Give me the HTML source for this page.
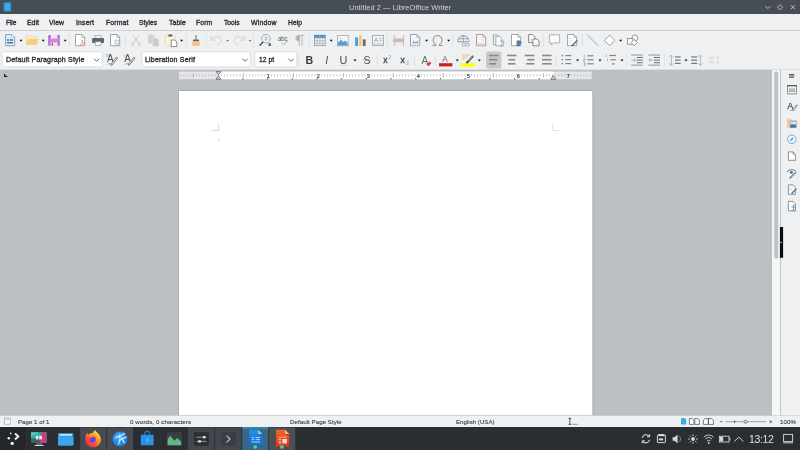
<!DOCTYPE html>
<html>
<head>
<meta charset="utf-8">
<title>Untitled 2 — LibreOffice Writer</title>
<style>
*{box-sizing:border-box;margin:0;padding:0}
html,body{width:800px;height:450px;overflow:hidden;background:#eff0f1;font-family:"Liberation Sans",sans-serif;}
#root{position:absolute;left:0;top:0;width:800px;height:450px;overflow:hidden;will-change:transform;background:#eff0f1}
.a{position:absolute}
.tx{position:absolute;white-space:nowrap;color:#2d3033;transform-origin:0 0}
#title{left:0;top:0;width:800px;height:14px;background:#474d55}
#work{left:0;top:70px;width:772px;height:345.5px;background:#bcc0c5}
#page{left:178.5px;top:90.6px;width:414px;height:326px;background:#fff;border:1px solid #a9adb2;border-bottom:none}
#task{left:0;top:427.4px;width:800px;height:23px;background:#2a2e33}
.combo{position:absolute;background:#fff;border:1px solid #d0d3d6;border-radius:2px}
svg{position:absolute;left:0;top:0}
</style>
</head>
<body>
<div id="root">
<div id="title" class="a"></div>
<div class="tx" style="left:348.7px;top:4.00px;font-size:7.3px;line-height:7.3px;color:#d2d5d8;letter-spacing:0.06px;transform:scaleX(1.0178);">Untitled 2 — LibreOffice Writer</div>
<div class="tx" style="left:5.6px;top:20.00px;font-size:6.7px;line-height:6.7px;color:#2b2e31;letter-spacing:-0.066px;transform:scaleX(0.9813);-webkit-text-stroke:0.32px #2b2e31;">File</div>
<div class="tx" style="left:26.6px;top:20.00px;font-size:6.7px;line-height:6.7px;color:#2b2e31;letter-spacing:0.076px;transform:scaleX(1.0193);-webkit-text-stroke:0.32px #2b2e31;">Edit</div>
<div class="tx" style="left:49.4px;top:20.00px;font-size:6.7px;line-height:6.7px;color:#2b2e31;letter-spacing:0.1px;transform:scaleX(1.0204);-webkit-text-stroke:0.32px #2b2e31;">View</div>
<div class="tx" style="left:76px;top:20.00px;font-size:6.7px;line-height:6.7px;color:#2b2e31;letter-spacing:0.124px;transform:scaleX(1.0358);-webkit-text-stroke:0.32px #2b2e31;">Insert</div>
<div class="tx" style="left:105.6px;top:20.00px;font-size:6.7px;line-height:6.7px;color:#2b2e31;letter-spacing:0.118px;transform:scaleX(1.0271);-webkit-text-stroke:0.32px #2b2e31;">Format</div>
<div class="tx" style="left:139.4px;top:20.00px;font-size:6.7px;line-height:6.7px;color:#2b2e31;letter-spacing:-0.025px;transform:scaleX(0.9932);-webkit-text-stroke:0.32px #2b2e31;">Styles</div>
<div class="tx" style="left:168.6px;top:20.00px;font-size:6.7px;line-height:6.7px;color:#2b2e31;letter-spacing:0.098px;transform:scaleX(1.0239);-webkit-text-stroke:0.32px #2b2e31;">Table</div>
<div class="tx" style="left:196.4px;top:20.00px;font-size:6.7px;line-height:6.7px;color:#2b2e31;letter-spacing:0.095px;transform:scaleX(1.0179);-webkit-text-stroke:0.32px #2b2e31;">Form</div>
<div class="tx" style="left:224px;top:20.00px;font-size:6.7px;line-height:6.7px;color:#2b2e31;letter-spacing:-0.005px;transform:scaleX(0.9987);-webkit-text-stroke:0.32px #2b2e31;">Tools</div>
<div class="tx" style="left:251px;top:20.00px;font-size:6.7px;line-height:6.7px;color:#2b2e31;letter-spacing:0.177px;transform:scaleX(1.0358);-webkit-text-stroke:0.32px #2b2e31;">Window</div>
<div class="tx" style="left:288px;top:20.00px;font-size:6.7px;line-height:6.7px;color:#2b2e31;letter-spacing:0.037px;transform:scaleX(1.0079);-webkit-text-stroke:0.32px #2b2e31;">Help</div>
<div class="a" style="left:0;top:30px;width:800px;height:1px;background:#cdd0d2"></div>
<div class="a" style="left:0;top:69px;width:800px;height:1px;background:#dcdee0"></div>
<div id="work" class="a"></div>
<svg width="800" height="450" viewBox="0 0 800 450"><rect x="2.100" y="51.850" width="100.200" height="15.100" rx="1.600" fill="#fff" stroke="#cfd2d5" stroke-width="0.700"/><rect x="142" y="51.850" width="108.300" height="15.100" rx="1.600" fill="#fff" stroke="#cfd2d5" stroke-width="0.700"/><rect x="254.800" y="51.850" width="42" height="15.100" rx="1.600" fill="#fff" stroke="#cfd2d5" stroke-width="0.700"/></svg>
<div class="tx" style="left:5.6px;top:57.00px;font-size:6.8px;line-height:6.8px;color:#2b2e31;letter-spacing:0.141px;transform:scaleX(1.0412);-webkit-text-stroke:0.32px #2b2e31;">Default Paragraph Style</div>
<div class="tx" style="left:145px;top:57.00px;font-size:6.8px;line-height:6.8px;color:#2b2e31;letter-spacing:0.142px;transform:scaleX(1.0445);-webkit-text-stroke:0.32px #2b2e31;">Liberation Serif</div>
<div class="tx" style="left:259px;top:57.00px;font-size:6.8px;line-height:6.8px;color:#2b2e31;letter-spacing:0.009px;transform:scaleX(1.0025);-webkit-text-stroke:0.32px #2b2e31;">12 pt</div>
<div class="a" style="left:0;top:415.5px;width:800px;height:12px;background:#eff0f1"></div>
<div class="tx" style="left:18px;top:419.00px;font-size:6.0px;line-height:6.0px;color:#3d4043;letter-spacing:0.04px;transform:scaleX(1.013);-webkit-text-stroke:0.12px #3d4043;">Page 1 of 1</div>
<div class="tx" style="left:130px;top:419.00px;font-size:6.0px;line-height:6.0px;color:#3d4043;letter-spacing:0.091px;transform:scaleX(1.0308);-webkit-text-stroke:0.12px #3d4043;">0 words, 0 characters</div>
<div class="tx" style="left:290px;top:419.00px;font-size:6.0px;line-height:6.0px;color:#3d4043;letter-spacing:0.059px;transform:scaleX(1.0198);-webkit-text-stroke:0.12px #3d4043;">Default Page Style</div>
<div class="tx" style="left:456px;top:419.00px;font-size:6.0px;line-height:6.0px;color:#3d4043;letter-spacing:0.034px;transform:scaleX(1.0108);-webkit-text-stroke:0.12px #3d4043;">English (USA)</div>
<div class="tx" style="left:780px;top:419.00px;font-size:6.0px;line-height:6.0px;color:#3d4043;letter-spacing:0.109px;transform:scaleX(1.0209);-webkit-text-stroke:0.12px #3d4043;">100%</div>
<div id="task" class="a"></div>
<div class="tx" style="left:749.1px;top:434.00px;font-size:11px;line-height:11px;color:#dfe1e3;letter-spacing:-0.328px;transform:scaleX(0.9499);">13:12</div>
<svg width="800" height="450" viewBox="0 0 800 450">
<path d="M178.5 415.5V90.5H592.9V415.5" fill="#fff" stroke="#a7abb0" stroke-width="1"/>
<rect x="3.9" y="2.6" width="7" height="8.6" rx="0.6" fill="#2aa6ea" stroke="#2586cc" stroke-width="0.5"/>
<path d="M5.5 5.2h3.2M5.5 6.8h3.8M5.5 8.4h3.8" stroke="#4cc0f5" stroke-width="0.6"/>
<path d="M765.400 6.100l2.500 2.500 2.500-2.500" fill="none" stroke="#c3c6ca" stroke-width="0.9"/>
<path d="M780.200 4.600l2.600 2.600-2.600 2.600-2.600-2.600z" fill="none" stroke="#c3c6ca" stroke-width="0.9"/>
<path d="M790.800 5.100l4.200 4.200M795 5.100l-4.200 4.200" fill="none" stroke="#c3c6ca" stroke-width="0.9"/>
<path d="M4.600 74v2.300h2.700" fill="none" stroke="#15171a" stroke-width="1.150"/>
<rect x="179" y="71.600" width="412.800" height="7.600" fill="#e4e6e8"/>
<rect x="218.300" y="71.600" width="335.200" height="7.600" fill="#fff"/>
<rect x="180.40" y="74.2" width="0.7" height="2.2" fill="#b0b3b6"/>
<rect x="183.52" y="74.2" width="0.7" height="2.2" fill="#b0b3b6"/>
<rect x="186.65" y="74.2" width="0.7" height="2.2" fill="#b0b3b6"/>
<rect x="189.77" y="74.2" width="0.7" height="2.2" fill="#b0b3b6"/>
<rect x="192.90" y="73.2" width="0.7" height="4.3" fill="#8e9296"/>
<rect x="196.02" y="74.2" width="0.7" height="2.2" fill="#b0b3b6"/>
<rect x="199.15" y="74.2" width="0.7" height="2.2" fill="#b0b3b6"/>
<rect x="202.27" y="74.2" width="0.7" height="2.2" fill="#b0b3b6"/>
<rect x="205.40" y="74.2" width="0.7" height="2.2" fill="#b0b3b6"/>
<rect x="208.52" y="74.2" width="0.7" height="2.2" fill="#b0b3b6"/>
<rect x="211.65" y="74.2" width="0.7" height="2.2" fill="#b0b3b6"/>
<rect x="214.77" y="74.2" width="0.7" height="2.2" fill="#b0b3b6"/>
<rect x="221.02" y="74.2" width="0.7" height="2.2" fill="#b0b3b6"/>
<rect x="224.15" y="74.2" width="0.7" height="2.2" fill="#b0b3b6"/>
<rect x="227.27" y="74.2" width="0.7" height="2.2" fill="#b0b3b6"/>
<rect x="230.40" y="74.2" width="0.7" height="2.2" fill="#b0b3b6"/>
<rect x="233.52" y="74.2" width="0.7" height="2.2" fill="#b0b3b6"/>
<rect x="236.65" y="74.2" width="0.7" height="2.2" fill="#b0b3b6"/>
<rect x="239.77" y="74.2" width="0.7" height="2.2" fill="#b0b3b6"/>
<rect x="242.90" y="73.2" width="0.7" height="4.3" fill="#8e9296"/>
<rect x="246.02" y="74.2" width="0.7" height="2.2" fill="#b0b3b6"/>
<rect x="249.15" y="74.2" width="0.7" height="2.2" fill="#b0b3b6"/>
<rect x="252.27" y="74.2" width="0.7" height="2.2" fill="#b0b3b6"/>
<rect x="255.40" y="74.2" width="0.7" height="2.2" fill="#b0b3b6"/>
<rect x="258.52" y="74.2" width="0.7" height="2.2" fill="#b0b3b6"/>
<rect x="261.65" y="74.2" width="0.7" height="2.2" fill="#b0b3b6"/>
<rect x="264.77" y="74.2" width="0.7" height="2.2" fill="#b0b3b6"/>
<rect x="271.02" y="74.2" width="0.7" height="2.2" fill="#b0b3b6"/>
<rect x="274.15" y="74.2" width="0.7" height="2.2" fill="#b0b3b6"/>
<rect x="277.27" y="74.2" width="0.7" height="2.2" fill="#b0b3b6"/>
<rect x="280.40" y="74.2" width="0.7" height="2.2" fill="#b0b3b6"/>
<rect x="283.52" y="74.2" width="0.7" height="2.2" fill="#b0b3b6"/>
<rect x="286.65" y="74.2" width="0.7" height="2.2" fill="#b0b3b6"/>
<rect x="289.77" y="74.2" width="0.7" height="2.2" fill="#b0b3b6"/>
<rect x="292.90" y="73.2" width="0.7" height="4.3" fill="#8e9296"/>
<rect x="296.02" y="74.2" width="0.7" height="2.2" fill="#b0b3b6"/>
<rect x="299.15" y="74.2" width="0.7" height="2.2" fill="#b0b3b6"/>
<rect x="302.27" y="74.2" width="0.7" height="2.2" fill="#b0b3b6"/>
<rect x="305.40" y="74.2" width="0.7" height="2.2" fill="#b0b3b6"/>
<rect x="308.52" y="74.2" width="0.7" height="2.2" fill="#b0b3b6"/>
<rect x="311.65" y="74.2" width="0.7" height="2.2" fill="#b0b3b6"/>
<rect x="314.77" y="74.2" width="0.7" height="2.2" fill="#b0b3b6"/>
<rect x="321.02" y="74.2" width="0.7" height="2.2" fill="#b0b3b6"/>
<rect x="324.15" y="74.2" width="0.7" height="2.2" fill="#b0b3b6"/>
<rect x="327.27" y="74.2" width="0.7" height="2.2" fill="#b0b3b6"/>
<rect x="330.40" y="74.2" width="0.7" height="2.2" fill="#b0b3b6"/>
<rect x="333.52" y="74.2" width="0.7" height="2.2" fill="#b0b3b6"/>
<rect x="336.65" y="74.2" width="0.7" height="2.2" fill="#b0b3b6"/>
<rect x="339.77" y="74.2" width="0.7" height="2.2" fill="#b0b3b6"/>
<rect x="342.90" y="73.2" width="0.7" height="4.3" fill="#8e9296"/>
<rect x="346.02" y="74.2" width="0.7" height="2.2" fill="#b0b3b6"/>
<rect x="349.15" y="74.2" width="0.7" height="2.2" fill="#b0b3b6"/>
<rect x="352.27" y="74.2" width="0.7" height="2.2" fill="#b0b3b6"/>
<rect x="355.40" y="74.2" width="0.7" height="2.2" fill="#b0b3b6"/>
<rect x="358.52" y="74.2" width="0.7" height="2.2" fill="#b0b3b6"/>
<rect x="361.65" y="74.2" width="0.7" height="2.2" fill="#b0b3b6"/>
<rect x="364.77" y="74.2" width="0.7" height="2.2" fill="#b0b3b6"/>
<rect x="371.02" y="74.2" width="0.7" height="2.2" fill="#b0b3b6"/>
<rect x="374.15" y="74.2" width="0.7" height="2.2" fill="#b0b3b6"/>
<rect x="377.27" y="74.2" width="0.7" height="2.2" fill="#b0b3b6"/>
<rect x="380.40" y="74.2" width="0.7" height="2.2" fill="#b0b3b6"/>
<rect x="383.52" y="74.2" width="0.7" height="2.2" fill="#b0b3b6"/>
<rect x="386.65" y="74.2" width="0.7" height="2.2" fill="#b0b3b6"/>
<rect x="389.77" y="74.2" width="0.7" height="2.2" fill="#b0b3b6"/>
<rect x="392.90" y="73.2" width="0.7" height="4.3" fill="#8e9296"/>
<rect x="396.02" y="74.2" width="0.7" height="2.2" fill="#b0b3b6"/>
<rect x="399.15" y="74.2" width="0.7" height="2.2" fill="#b0b3b6"/>
<rect x="402.27" y="74.2" width="0.7" height="2.2" fill="#b0b3b6"/>
<rect x="405.40" y="74.2" width="0.7" height="2.2" fill="#b0b3b6"/>
<rect x="408.52" y="74.2" width="0.7" height="2.2" fill="#b0b3b6"/>
<rect x="411.65" y="74.2" width="0.7" height="2.2" fill="#b0b3b6"/>
<rect x="414.77" y="74.2" width="0.7" height="2.2" fill="#b0b3b6"/>
<rect x="421.02" y="74.2" width="0.7" height="2.2" fill="#b0b3b6"/>
<rect x="424.15" y="74.2" width="0.7" height="2.2" fill="#b0b3b6"/>
<rect x="427.27" y="74.2" width="0.7" height="2.2" fill="#b0b3b6"/>
<rect x="430.40" y="74.2" width="0.7" height="2.2" fill="#b0b3b6"/>
<rect x="433.52" y="74.2" width="0.7" height="2.2" fill="#b0b3b6"/>
<rect x="436.65" y="74.2" width="0.7" height="2.2" fill="#b0b3b6"/>
<rect x="439.77" y="74.2" width="0.7" height="2.2" fill="#b0b3b6"/>
<rect x="442.90" y="73.2" width="0.7" height="4.3" fill="#8e9296"/>
<rect x="446.02" y="74.2" width="0.7" height="2.2" fill="#b0b3b6"/>
<rect x="449.15" y="74.2" width="0.7" height="2.2" fill="#b0b3b6"/>
<rect x="452.27" y="74.2" width="0.7" height="2.2" fill="#b0b3b6"/>
<rect x="455.40" y="74.2" width="0.7" height="2.2" fill="#b0b3b6"/>
<rect x="458.52" y="74.2" width="0.7" height="2.2" fill="#b0b3b6"/>
<rect x="461.65" y="74.2" width="0.7" height="2.2" fill="#b0b3b6"/>
<rect x="464.77" y="74.2" width="0.7" height="2.2" fill="#b0b3b6"/>
<rect x="471.02" y="74.2" width="0.7" height="2.2" fill="#b0b3b6"/>
<rect x="474.15" y="74.2" width="0.7" height="2.2" fill="#b0b3b6"/>
<rect x="477.27" y="74.2" width="0.7" height="2.2" fill="#b0b3b6"/>
<rect x="480.40" y="74.2" width="0.7" height="2.2" fill="#b0b3b6"/>
<rect x="483.52" y="74.2" width="0.7" height="2.2" fill="#b0b3b6"/>
<rect x="486.65" y="74.2" width="0.7" height="2.2" fill="#b0b3b6"/>
<rect x="489.77" y="74.2" width="0.7" height="2.2" fill="#b0b3b6"/>
<rect x="492.90" y="73.2" width="0.7" height="4.3" fill="#8e9296"/>
<rect x="496.02" y="74.2" width="0.7" height="2.2" fill="#b0b3b6"/>
<rect x="499.15" y="74.2" width="0.7" height="2.2" fill="#b0b3b6"/>
<rect x="502.27" y="74.2" width="0.7" height="2.2" fill="#b0b3b6"/>
<rect x="505.40" y="74.2" width="0.7" height="2.2" fill="#b0b3b6"/>
<rect x="508.52" y="74.2" width="0.7" height="2.2" fill="#b0b3b6"/>
<rect x="511.65" y="74.2" width="0.7" height="2.2" fill="#b0b3b6"/>
<rect x="514.78" y="74.2" width="0.7" height="2.2" fill="#b0b3b6"/>
<rect x="521.03" y="74.2" width="0.7" height="2.2" fill="#b0b3b6"/>
<rect x="524.15" y="74.2" width="0.7" height="2.2" fill="#b0b3b6"/>
<rect x="527.28" y="74.2" width="0.7" height="2.2" fill="#b0b3b6"/>
<rect x="530.40" y="74.2" width="0.7" height="2.2" fill="#b0b3b6"/>
<rect x="533.53" y="74.2" width="0.7" height="2.2" fill="#b0b3b6"/>
<rect x="536.65" y="74.2" width="0.7" height="2.2" fill="#b0b3b6"/>
<rect x="539.78" y="74.2" width="0.7" height="2.2" fill="#b0b3b6"/>
<rect x="542.90" y="73.2" width="0.7" height="4.3" fill="#8e9296"/>
<rect x="546.03" y="74.2" width="0.7" height="2.2" fill="#b0b3b6"/>
<rect x="549.15" y="74.2" width="0.7" height="2.2" fill="#b0b3b6"/>
<rect x="552.28" y="74.2" width="0.7" height="2.2" fill="#b0b3b6"/>
<rect x="555.40" y="74.2" width="0.7" height="2.2" fill="#b0b3b6"/>
<rect x="558.53" y="74.2" width="0.7" height="2.2" fill="#b0b3b6"/>
<rect x="561.65" y="74.2" width="0.7" height="2.2" fill="#b0b3b6"/>
<rect x="564.78" y="74.2" width="0.7" height="2.2" fill="#b0b3b6"/>
<rect x="571.03" y="74.2" width="0.7" height="2.2" fill="#b0b3b6"/>
<rect x="574.15" y="74.2" width="0.7" height="2.2" fill="#b0b3b6"/>
<rect x="577.28" y="74.2" width="0.7" height="2.2" fill="#b0b3b6"/>
<rect x="580.40" y="74.2" width="0.7" height="2.2" fill="#b0b3b6"/>
<rect x="583.53" y="74.2" width="0.7" height="2.2" fill="#b0b3b6"/>
<rect x="586.65" y="74.2" width="0.7" height="2.2" fill="#b0b3b6"/>
<rect x="589.78" y="74.2" width="0.7" height="2.2" fill="#b0b3b6"/>
<text x="268.2" y="77.5" font-size="5.600" text-anchor="middle" fill="#2f3235" stroke="#2f3235" stroke-width="0.150" font-family="Liberation Sans">1</text>
<text x="318.2" y="77.5" font-size="5.600" text-anchor="middle" fill="#2f3235" stroke="#2f3235" stroke-width="0.150" font-family="Liberation Sans">2</text>
<text x="368.2" y="77.5" font-size="5.600" text-anchor="middle" fill="#2f3235" stroke="#2f3235" stroke-width="0.150" font-family="Liberation Sans">3</text>
<text x="418.2" y="77.5" font-size="5.600" text-anchor="middle" fill="#2f3235" stroke="#2f3235" stroke-width="0.150" font-family="Liberation Sans">4</text>
<text x="468.2" y="77.5" font-size="5.600" text-anchor="middle" fill="#2f3235" stroke="#2f3235" stroke-width="0.150" font-family="Liberation Sans">5</text>
<text x="518.2" y="77.5" font-size="5.600" text-anchor="middle" fill="#2f3235" stroke="#2f3235" stroke-width="0.150" font-family="Liberation Sans">6</text>
<text x="568.2" y="77.5" font-size="5.600" text-anchor="middle" fill="#2f3235" stroke="#2f3235" stroke-width="0.150" font-family="Liberation Sans">7</text>
<path d="M242.00 79.3h1.8l-0.9-1.2z" fill="#2b2e31"/>
<path d="M266.70 79.3h1.8l-0.9-1.2z" fill="#2b2e31"/>
<path d="M291.40 79.3h1.8l-0.9-1.2z" fill="#2b2e31"/>
<path d="M316.10 79.3h1.8l-0.9-1.2z" fill="#2b2e31"/>
<path d="M340.80 79.3h1.8l-0.9-1.2z" fill="#2b2e31"/>
<path d="M365.50 79.3h1.8l-0.9-1.2z" fill="#2b2e31"/>
<path d="M390.20 79.3h1.8l-0.9-1.2z" fill="#2b2e31"/>
<path d="M414.90 79.3h1.8l-0.9-1.2z" fill="#2b2e31"/>
<path d="M439.60 79.3h1.8l-0.9-1.2z" fill="#2b2e31"/>
<path d="M464.30 79.3h1.8l-0.9-1.2z" fill="#2b2e31"/>
<path d="M489.00 79.3h1.8l-0.9-1.2z" fill="#2b2e31"/>
<path d="M513.70 79.3h1.8l-0.9-1.2z" fill="#2b2e31"/>
<path d="M538.40 79.3h1.8l-0.9-1.2z" fill="#2b2e31"/>
<path d="M216.1 71.6h4.8l-2.4 3.3z" fill="#d8dadc" stroke="#33373b" stroke-width="0.6"/>
<path d="M216.1 79.3h4.8l-2.4-3.6z" fill="#d8dadc" stroke="#33373b" stroke-width="0.6"/>
<path d="M550.9 79.3h4.8l-2.4-3.6z" fill="#d8dadc" stroke="#33373b" stroke-width="0.6"/>
<path d="M211.6 130.6h7V124" fill="none" stroke="#c9c9c9" stroke-width="0.7"/>
<path d="M559.5 130.6h-6.8V124" fill="none" stroke="#d2d2d2" stroke-width="0.7"/>
<rect x="218.5" y="138.8" width="0.9" height="1.6" fill="#bdbdbd"/>
<rect x="772" y="70" width="8.5" height="345.5" fill="#f5f6f6"/>
<rect x="774.2" y="71.3" width="4" height="187.4" rx="2" fill="#bfc2c5"/>
<rect x="780" y="70" width="0.8" height="345.5" fill="#b4b7ba"/>
<rect x="779.9" y="227" width="3.2" height="30.8" fill="#0a0a0a"/>
<path d="M780.6 241.6l1.6 1l-1.6 1z" fill="#e0e0e0"/>
<path d="M789 74.5h5.2M789 75.9h5.2M789 77.3h5.2" stroke="#4a4d50" stroke-width="0.9"/>
<rect x="787.700" y="85.500" width="8.600" height="8.400" fill="#f7f8f8" stroke="#666a6e" stroke-width="0.750"/>
<rect x="787.300" y="85.100" width="9.400" height="1.300" fill="#565a5f"/>
<rect x="789.700" y="88.900" width="4.600" height="2.800" fill="#e4e5e6" stroke="#74787c" stroke-width="0.600"/><rect x="790.600" y="90" width="2.800" height="0.600" fill="#85898d"/>
<text x="787.300" y="109.200" font-size="9" fill="#45484b" stroke="#45484b" stroke-width="0.250" font-family="Liberation Sans">A</text>
<path d="M793.200 110l3.600-4.600" stroke="#7c8084" stroke-width="1.900" stroke-linecap="round"/>
<path d="M793.500 109.600l3.200-4" stroke="#f1f2f3" stroke-width="0.800" stroke-linecap="round"/>
<path d="M789.800 110.800c1.400-1 3-1 4.600-0.200" stroke="#5b9bd5" stroke-width="0.900" fill="none"/>
<path d="M786.900 118.400h3.400l0.800 1h2.400v8.400h-6.600z" fill="#f8cc96"/>
<rect x="789.600" y="120.800" width="7.200" height="6.800" fill="#4f93d0" stroke="#f6c488" stroke-width="0.800"/>
<path d="M790 127.4l2.2-2.6 1.4 1.4 1.2-1 1.6 2.2z" fill="#2d6da8"/>
<rect x="790.2" y="121.6" width="6" height="2.6" fill="#d9eaf7"/>
<circle cx="791.800" cy="139.300" r="4.200" fill="#f4f9fd" stroke="#5b9bd5" stroke-width="0.9"/>
<path d="M789.700 141.400l1.300-2.900 2.900-1.300-1.300 2.900z" fill="#5b9bd5"/>
<path d="M788.4 151.9h4.6l2.4 2.4v6h-7z" fill="#fff" stroke="#74787c" stroke-width="0.8"/>
<path d="M793 151.9v2.4h2.4" fill="none" stroke="#74787c" stroke-width="0.6"/>
<path d="M787.2 172c2-3.2 6.4-3.2 8.6-0.6" fill="none" stroke="#6b6f73" stroke-width="1"/>
<circle cx="791.4" cy="172.2" r="1.5" fill="#6b6f73"/>
<path d="M790.4 177.6l5.8-5.6" stroke="#5b9bd5" stroke-width="1.6"/>
<path d="M789.6 178.4l1.6-0.4-1.2-1.2z" fill="#3b3e41"/>
<path d="M788.4 184.9h4.6l2.4 2.4v7h-7z" fill="#fff" stroke="#74787c" stroke-width="0.8"/>
<path d="M789.8 188h3M789.8 189.8h2.2" stroke="#f0a860" stroke-width="0.7"/>
<path d="M791.6 193.6l4.8-4.8" stroke="#3f88c5" stroke-width="1.5"/>
<path d="M788.4 201.4h4.6l2.4 2.4v7h-7z" fill="#fff" stroke="#74787c" stroke-width="0.8"/>
<circle cx="793.6" cy="205.6" r="0.9" fill="#4a90c8"/>
<path d="M791.4 207.2h4.4M793.6 207.2v2.2M793.6 209.2l-1.4 2.2M793.6 209.2l1.4 2.2" stroke="#4a90c8" stroke-width="0.8" fill="none"/>
<path d="M5.6 34.5h6.3l2.8 2.8v8.399999999999999h-9.1z" fill="#d9eefd" stroke="#7f9db6" stroke-width="0.9"/><path d="M11.899999999999999 34.5v2.8h2.8" fill="none" stroke="#7f9db6" stroke-width="0.7200000000000001"/>
<path d="M11.900 34.900v2.400h2.400z" fill="#fafdff"/>
<path d="M7 40.100h2.300M10 40.100h3" stroke="#44749f" stroke-width="1.500"/><path d="M7 42.700h6" stroke="#3f6f9c" stroke-width="1.400"/>
<path d="M19.5 39.75h3l-1.5 1.9z" fill="#111214"/>
<path d="M26.400 35.800h4l1 1.300h5.400v7.400h-10.400z" fill="#fbeaca" stroke="#ebc78f" stroke-width="0.500"/>
<path d="M27.700 38.900h10.800l-1.800 6h-10.500z" fill="#f7cd7e"/>
<path d="M41.7 39.75h3l-1.5 1.9z" fill="#111214"/>
<rect x="48.200" y="35" width="11.600" height="10.800" rx="0.500" fill="#b570c2"/>
<rect x="49.700" y="38.400" width="8.600" height="4.500" fill="#d985d9"/>
<rect x="50.800" y="35" width="6.600" height="3.700" fill="#f3e0f5"/>
<rect x="50.600" y="42.600" width="7" height="3.200" fill="#f6e8f7"/>
<rect x="51.800" y="43.100" width="1.100" height="2.500" fill="#7a3a86"/>
<path d="M63.7 39.75h3l-1.5 1.9z" fill="#111214"/>
<rect x="68.85000000000001" y="34" width="0.7" height="12.5" fill="#d7d9db"/>
<path d="M75.5 34.5h6.3999999999999995l2.8 2.8v8.399999999999999h-9.2z" fill="#fff" stroke="#8c8f92" stroke-width="0.8"/><path d="M81.9 34.5v2.8h2.8" fill="none" stroke="#8c8f92" stroke-width="0.6400000000000001"/>
<path d="M80.2 45.4c1.8-1.6 2.6-4.2 2.2-5.6c-0.9 0.2-0.2 3 2.6 4c-1.6-0.4-3.6 0.2-4.8 1.6z" fill="none" stroke="#e67f83" stroke-width="0.750"/>
<rect x="95" y="35.600" width="6.200" height="3" fill="#eef5fa" stroke="#9ba0a5" stroke-width="0.700"/>
<rect x="92.100" y="38" width="11.900" height="5" rx="0.800" fill="#5c666f"/>
<rect x="95.200" y="41.800" width="5.800" height="3.600" fill="#f6f7f7" stroke="#8c9196" stroke-width="0.600"/>
<path d="M110.5 34.5h6.3999999999999995l2.8 2.8v8.399999999999999h-9.2z" fill="#fbfcfd" stroke="#8c8f92" stroke-width="0.8"/><path d="M116.9 34.5v2.8h2.8" fill="none" stroke="#8c8f92" stroke-width="0.6400000000000001"/>
<rect x="115.200" y="40.200" width="3.800" height="3.800" fill="#f2f8fd" stroke="#9cc0df" stroke-width="0.900"/>
<path d="M118.800 44l1.400 1.600" stroke="#9cc0df" stroke-width="0.900"/>
<rect x="124.85000000000001" y="34" width="0.7" height="12.5" fill="#d7d9db"/>
<path d="M133 35.2l5.6 8M139 35.2l-5.6 8" stroke="#c3c5c7" stroke-width="0.9" fill="none"/>
<circle cx="132.8" cy="44.4" r="1.4" fill="none" stroke="#c3c5c7" stroke-width="0.8"/><circle cx="139.2" cy="44.4" r="1.4" fill="none" stroke="#c3c5c7" stroke-width="0.8"/>
<path d="M148 34.400h4.600l2.400 2.400v6.800h-7z" fill="#d0d2d4"/>
<path d="M152.400 38h4.200l2.400 2.400v6.100h-6.600z" fill="#c8cacc" stroke="#eff0f1" stroke-width="0.600"/>
<rect x="165.400" y="35.600" width="9.800" height="10.600" rx="0.600" fill="#f9f2de" stroke="#e2d2a4" stroke-width="0.700"/>
<rect x="168.500" y="34.500" width="3.600" height="2" fill="#55585b"/>
<path d="M171.2 40h3.6l2 2v4.6h-5.6z" fill="#fff" stroke="#6f7276" stroke-width="0.8"/>
<path d="M180.1 39.75h3l-1.5 1.9z" fill="#111214"/>
<rect x="185.65" y="34" width="0.7" height="12.5" fill="#d7d9db"/>
<rect x="195.4" y="35" width="1.3" height="4.6" fill="#8c8f92"/>
<path d="M193.6 39.4h4.8l1 1.8h-6.8z" fill="#5c5f62"/>
<rect x="192.4" y="41.2" width="7.4" height="4.6" fill="#f7bd80"/>
<rect x="192.4" y="42.8" width="7.4" height="0.8" fill="#f9d3a4"/>
<rect x="205.75" y="34" width="0.7" height="12.5" fill="#d7d9db"/>
<path d="M211 35.6v4.6h4.6" fill="none" stroke="#d8dadc" stroke-width="1.2"/>
<path d="M211.4 39.8c3-4.6 9.4-4.2 10 0.6c0.2 2.4-2 4-4.6 5.4" fill="none" stroke="#d8dadc" stroke-width="1.2"/>
<path d="M226.1 39.949999999999996h3l-1.5 1.9z" fill="#77797c"/>
<path d="M244.6 35.6v4.6h-4.6" fill="none" stroke="#d8dadc" stroke-width="1.2"/>
<path d="M244.2 39.8c-3-4.6-9.4-4.2-10 0.6c-0.2 2.4 2 4 4.6 5.4" fill="none" stroke="#d8dadc" stroke-width="1.2"/>
<path d="M248.5 39.949999999999996h3l-1.5 1.9z" fill="#77797c"/>
<rect x="253.25" y="34" width="0.7" height="12.5" fill="#d7d9db"/>
<circle cx="265.900" cy="38.600" r="4.300" fill="#eaf3fa" stroke="#979ca1" stroke-width="0.800"/>
<path d="M264.400 37.200c1.400-0.800 3 0.200 2.600 1.600c-0.400 1.200-1.800 1.400-2.600 0.800" fill="none" stroke="#9bbbd8" stroke-width="1.100"/>
<path d="M263.2 41.8l-3.6 3.8" stroke="#222" stroke-width="1.1"/>
<text x="268.200" y="46.200" font-size="5" font-family="Liberation Sans" fill="#222" font-weight="bold">a</text>
<text transform="translate(277.900,41.400) scale(0.900,1)" font-size="6.600" font-family="Liberation Sans" fill="#505356">abc</text>
<path d="M281.400 42.200l2.400 2.400 4.200-4" fill="none" stroke="#86c69b" stroke-width="1"/>
<path d="M299.4 35.4v10.4M302 35.4v10.4M304.4 35.4h-6c-3.4 0-3.4 5.4 0 5.4h1" fill="none" stroke="#a8abae" stroke-width="0.8"/>
<path d="M299 35.6h-0.8c-2.6 0-2.6 5 0 5h0.8z" fill="#a8abae"/>
<rect x="308.84999999999997" y="34" width="0.7" height="12.5" fill="#d7d9db"/>
<rect x="314.400" y="35.300" width="10.700" height="10.300" fill="#fdfdfd" stroke="#8499ad" stroke-width="0.800"/>
<defs><linearGradient id="thg" x1="0" y1="0" x2="0" y2="1"><stop offset="0" stop-color="#4b85ba"/><stop offset="1" stop-color="#74a8d6"/></linearGradient></defs>
<rect x="314" y="34.900" width="11.500" height="3.500" fill="url(#thg)"/>
<path d="M314.400 40.800h10.700M314.400 43.200h10.700" stroke="#a39a96" stroke-width="0.700"/>
<path d="M317.100 38.400v7.200M319.800 35v10.600M322.500 38.400v7.200" stroke="#9fb0c0" stroke-width="0.700"/>
<path d="M329.7 39.75h3l-1.5 1.9z" fill="#111214"/>
<rect x="337.400" y="35.400" width="10.800" height="10.400" fill="#f4f8fb" stroke="#a2a6aa" stroke-width="0.800"/>
<path d="M337.8 45.4v-2.6l3.2-3 2.4 2.2 1.8-1.6 2.6 2.6v2.4z" fill="#5a9fd8"/>
<circle cx="340.6" cy="38.2" r="1" fill="#ecd3ab"/>
<rect x="355.2" y="37.4" width="2.8" height="8.6" fill="#4e9ad2"/>
<rect x="359" y="35.2" width="2.8" height="10.8" fill="#f6c687"/>
<rect x="362.8" y="39.4" width="2.8" height="6.6" fill="#6b6b64"/>
<rect x="372.400" y="35.600" width="11.200" height="9.800" fill="#f1f2f3" stroke="#9c9fa2" stroke-width="0.800"/>
<rect x="373" y="42.600" width="10" height="2.400" fill="#d9dbdd"/>
<text x="374" y="42.400" font-size="6.200" font-family="Liberation Sans" fill="#5f9acb">A</text>
<path d="M379.200 38.400h3.200M379.200 40.400h3.200" stroke="#a4a7aa" stroke-width="0.700"/>
<rect x="387.25" y="34" width="0.7" height="12.5" fill="#d7d9db"/>
<path d="M394.4 35v11.2M403.6 35v11.2" stroke="#c6a9a9" stroke-width="0.8"/>
<path d="M392.4 40.4l2.4-1.8h9v3.6h-9z" fill="#cbb8b8"/>
<path d="M410.5 34.5h6.3999999999999995l2.8 2.8v8.399999999999999h-9.2z" fill="#f3f7fa" stroke="#8c8f92" stroke-width="0.8"/><path d="M416.9 34.5v2.8h2.8" fill="none" stroke="#8c8f92" stroke-width="0.6400000000000001"/>
<rect x="411.600" y="40" width="7.200" height="5.200" fill="#e3eff8"/><path d="M413.500 41.200v1.600h4.200v-1.600" fill="none" stroke="#6f8eab" stroke-width="1"/>
<path d="M425.1 39.75h3l-1.5 1.9z" fill="#111214"/>
<path d="M432.4 45.4h3.6v-0.8c-4.4-2-3.6-9 1.6-9c5.2 0 6 7 1.6 9v0.8h3.6" fill="none" stroke="#7a7d80" stroke-width="0.9"/>
<path d="M447.1 39.75h3l-1.5 1.9z" fill="#111214"/>
<rect x="452.25" y="34" width="0.7" height="12.5" fill="#d7d9db"/>
<path d="M457.800 41.800c0-8.200 11-8.200 11 0z" fill="#fafbfb" stroke="#7a7e82" stroke-width="0.800"/>
<path d="M463.300 35.800v6M458.200 38.800h10.200" fill="none" stroke="#7a7e82" stroke-width="0.650"/>
<path d="M460.600 41.800c0-3.600 0.800-5.400 2.700-6M466 41.800c0-3.600-0.800-5.400-2.700-6" fill="none" stroke="#a4a8ac" stroke-width="0.500"/>
<rect x="461.800" y="43.400" width="3.600" height="2.700" rx="1.200" fill="none" stroke="#7fa9cf" stroke-width="0.800"/><rect x="465.800" y="43.400" width="3.600" height="2.700" rx="1.200" fill="none" stroke="#7fa9cf" stroke-width="0.800"/>
<path d="M476.5 34.5h6.3999999999999995l2.8 2.8v8.399999999999999h-9.2z" fill="#fbf7f7" stroke="#918c8c" stroke-width="0.8"/><path d="M482.9 34.5v2.8h2.8" fill="none" stroke="#918c8c" stroke-width="0.6400000000000001"/>
<rect x="477.400" y="42.800" width="7.400" height="2.400" fill="#edd8d8"/>
<path d="M481 39.4h2.6v2.6" stroke="#e9c9c9" stroke-width="0.700" fill="none"/>
<path d="M493.4 34.8h4l2 2v8h-6z" fill="#eeeeee" stroke="#8c8f92" stroke-width="0.7"/>
<path d="M495.8 36.4h4l2 2v7.4h-6z" fill="#f7f9fb" stroke="#8c8f92" stroke-width="0.7"/>
<path d="M500 41h3.6v5h-3.6" fill="none" stroke="#86b3d8" stroke-width="0.9"/>
<path d="M511.5 34.5h6.3999999999999995l2.8 2.8v8.399999999999999h-9.2z" fill="#fff" stroke="#8c8f92" stroke-width="0.8"/><path d="M517.9000000000001 34.5v2.8h2.8" fill="none" stroke="#8c8f92" stroke-width="0.6400000000000001"/>
<path d="M516.6 40.4h3.4l1.8 2.2-1.8 2.2h-3.4z" fill="#3f7fb5"/>
<rect x="516.4" y="44.8" width="4" height="1.2" fill="#5b6268"/>
<path d="M528.600 34.600h4.200l2 2v5.900h-6.200z" fill="#fbf9f9" stroke="#777475" stroke-width="0.850"/>
<path d="M532.900 39h4.200l2 2v4.800h-6.200z" fill="#fbf9f9" stroke="#777475" stroke-width="0.850"/>
<path d="M530 39.400h3M530 40.800h2M534.400 43.600h3" stroke="#dcc3c3" stroke-width="0.600"/>
<rect x="543.25" y="34" width="0.7" height="12.5" fill="#d7d9db"/>
<path d="M549.400 34.800h10.200v8h-6l-2.200 2.200v-2.200h-2z" fill="#fbfbfb" stroke="#9c9fa2" stroke-width="0.800"/>
<path d="M567.5 34.5h6.3999999999999995l2.8 2.8v8.399999999999999h-9.2z" fill="#fff" stroke="#8c8f92" stroke-width="0.8"/><path d="M573.9000000000001 34.5v2.8h2.8" fill="none" stroke="#8c8f92" stroke-width="0.6400000000000001"/>
<path d="M569.2 38.6h3.4M569.2 40.6h2.6M569.2 42.6h1.8" stroke="#f4c094" stroke-width="0.700"/>
<path d="M572.600 45.200l4.800-4.800" stroke="#4f8cc4" stroke-width="1.800"/>
<path d="M571.6 46.2l1.8-0.4-1.4-1.4z" fill="#33373b"/>
<rect x="581.85" y="34" width="0.7" height="12.5" fill="#d7d9db"/>
<path d="M587.200 34.800l11 11" stroke="#a9cae5" stroke-width="1.300"/>
<path d="M609.600 35.200l5.300 5.200-5.300 5.200-5.300-5.200z" fill="#fff" stroke="#808386" stroke-width="0.800"/>
<path d="M619.1 39.75h3l-1.5 1.9z" fill="#111214"/>
<circle cx="635" cy="37.900" r="2.900" fill="#fbfbfb" stroke="#808386" stroke-width="0.800"/>
<rect x="627.600" y="38.600" width="5.400" height="5.600" fill="#fbfbfb" stroke="#808386" stroke-width="0.800"/>
<path d="M634.200 39.400l3.100 3.200-3.100 3.200-3.100-3.200z" fill="#fbfbfb" stroke="#808386" stroke-width="0.800"/>
<path d="M94.0 58.7l2.6 2.6 2.6-2.6" fill="none" stroke="#4a4d50" stroke-width="0.9"/>
<path d="M242.5 58.7l2.6 2.6 2.6-2.6" fill="none" stroke="#4a4d50" stroke-width="0.9"/>
<path d="M288.5 58.7l2.6 2.6 2.6-2.6" fill="none" stroke="#4a4d50" stroke-width="0.9"/>
<circle cx="107.400" cy="55.400" r="1.200" fill="none" stroke="#7fb0dc" stroke-width="0.700"/><text x="106.9" y="62.300" font-size="10" font-family="Liberation Sans" fill="#46494c">A</text><path d="M111.4 64.600l5.400-6.600" stroke="#73777b" stroke-width="2.100" stroke-linecap="round"/><path d="M111.6 64.300l5-6.100" stroke="#f4f5f6" stroke-width="0.900" stroke-linecap="round"/><path d="M107.8 64.400c1.400-1 2.600-1 3.800-0.200" fill="none" stroke="#6fa0cc" stroke-width="0.900"/>
<path d="M124.800 53.400l0.700 1.500 1.500 0.200-1.100 1.100 0.300 1.500-1.400-0.800-1.400 0.800 0.300-1.500-1.100-1.100 1.500-0.200z" fill="#f9cfa4"/><text x="124.30000000000001" y="62.300" font-size="10" font-family="Liberation Sans" fill="#46494c">A</text><path d="M128.8 64.600l5.400-6.600" stroke="#73777b" stroke-width="2.100" stroke-linecap="round"/><path d="M129.0 64.300l5-6.100" stroke="#f4f5f6" stroke-width="0.900" stroke-linecap="round"/><path d="M125.2 64.400c1.400-1 2.600-1 3.800-0.200" fill="none" stroke="#6fa0cc" stroke-width="0.900"/>
<rect x="298.25" y="54" width="0.7" height="12" fill="#d7d9db"/>
<text x="305.6" y="64" font-size="10.6" font-family="Liberation Sans" font-weight="bold" fill="#3b3e41">B</text>
<text x="325.2" y="64" font-size="10.6" font-family="Liberation Sans" font-style="italic" fill="#4a4d50">I</text>
<text x="339.6" y="63.8" font-size="10.8" font-family="Liberation Sans" fill="#4a4d50">U</text>
<rect x="340" y="65" width="7.400" height="0.800" fill="#c2d9ee"/>
<path d="M353.5 59.55h3l-1.5 1.9z" fill="#111214"/>
<text x="363.6" y="64" font-size="10.4" font-family="Liberation Sans" fill="#4a4d50">S</text>
<rect x="363.4" y="59.9" width="7.2" height="0.6" fill="#8b8e91"/>
<rect x="376.65" y="54" width="0.7" height="12" fill="#d7d9db"/>
<text x="383.200" y="63" font-size="8.600" font-family="Liberation Sans" fill="#3d4043" stroke="#3d4043" stroke-width="0.300">x</text>
<text x="388.400" y="59" font-size="4.800" font-family="Liberation Sans" fill="#6fa6da">2</text>
<text x="400.600" y="62.600" font-size="8.600" font-family="Liberation Sans" fill="#3d4043" stroke="#3d4043" stroke-width="0.300">x</text>
<text x="406.200" y="65.200" font-size="4.800" font-family="Liberation Sans" fill="#6fa6da">2</text>
<rect x="413.84999999999997" y="54" width="0.7" height="12" fill="#d7d9db"/>
<text x="421.400" y="63.600" font-size="10" font-family="Liberation Sans" fill="#52705f">A</text>
<path d="M426.6 64.4l3-3 1.8 1.8-3 3z" fill="#e03a3e"/>
<path d="M425.4 63.2l1.2 1.2" stroke="#f0a0a0" stroke-width="1.2"/>
<rect x="435.25" y="54" width="0.7" height="12" fill="#d7d9db"/>
<text x="442.2" y="62" font-size="8.2" font-family="Liberation Sans" fill="#55585b">A</text>
<rect x="439" y="63.2" width="13.4" height="3.2" fill="#c9211e"/>
<path d="M455.7 59.55h3l-1.5 1.9z" fill="#111214"/>
<path d="M462.600 55.200h2M465.400 55.200h2M468.200 55.200h1.600M462.600 57.200h2M465.400 57.200h2M462.600 59.200h2" stroke="#f6b57a" stroke-width="1.300"/>
<path d="M467.600 62.200l5-5.600" stroke="#3a3d40" stroke-width="2" stroke-linecap="round"/><path d="M468.600 61.100l3.800-4.300" stroke="#e9eaeb" stroke-width="0.700" stroke-linecap="round"/>
<path d="M465.800 63.800l2.400-0.800-1.600-1.600z" fill="#1d1f21"/>
<rect x="460.8" y="63.4" width="14.2" height="3.2" fill="#ffff00"/>
<path d="M477.9 59.55h3l-1.5 1.9z" fill="#111214"/>
<rect x="483.25" y="54" width="0.7" height="12" fill="#d7d9db"/>
<rect x="486" y="51.6" width="15.4" height="16.8" rx="1.6" fill="#c6c8ca"/>
<rect x="489.00" y="54.7" width="9.6" height="1.600" fill="#868a8d"/><rect x="489.00" y="58.900000000000006" width="8.2" height="1.600" fill="#868a8d"/><rect x="489.00" y="63.0" width="7.2" height="1.600" fill="#868a8d"/>
<rect x="507.00" y="54.7" width="9.6" height="1.600" fill="#868a8d"/><rect x="508.50" y="58.900000000000006" width="6.6" height="1.600" fill="#868a8d"/><rect x="508.00" y="63.0" width="7.6" height="1.600" fill="#868a8d"/>
<rect x="524.80" y="54.7" width="9.6" height="1.600" fill="#868a8d"/><rect x="527.20" y="58.900000000000006" width="7.2" height="1.600" fill="#868a8d"/><rect x="526.20" y="63.0" width="8.2" height="1.600" fill="#868a8d"/>
<rect x="542.00" y="54.7" width="9.6" height="1.600" fill="#868a8d"/><rect x="542.00" y="58.900000000000006" width="9.6" height="1.600" fill="#868a8d"/><rect x="542.00" y="63.0" width="9.6" height="1.600" fill="#868a8d"/>
<rect x="555.65" y="54" width="0.7" height="12" fill="#d7d9db"/>
<rect x="561.6" y="54.9" width="1.4" height="1.4" fill="#5a8cc0"/>
<rect x="565.4" y="55.0" width="5.8" height="1.2" fill="#808386"/>
<rect x="561.6" y="58.9" width="1.4" height="1.4" fill="#5a8cc0"/>
<rect x="565.4" y="59.0" width="5.8" height="1.2" fill="#808386"/>
<rect x="561.6" y="62.9" width="1.4" height="1.4" fill="#5a8cc0"/>
<rect x="565.4" y="63.0" width="5.8" height="1.2" fill="#808386"/>
<path d="M576.1 59.55h3l-1.5 1.9z" fill="#111214"/>
<path d="M584.2 54.4v3.2M583.6 58.8h1.2v1.2h-1.2v1.2h1.4M583.6 62.6h1.4v3h-1.4M583.8 64h1.2" fill="none" stroke="#5b9bd5" stroke-width="0.6"/>
<rect x="587.4" y="55.199999999999996" width="6.2" height="1.2" fill="#808386"/>
<rect x="587.4" y="59.199999999999996" width="6.2" height="1.2" fill="#808386"/>
<rect x="587.4" y="63.199999999999996" width="6.2" height="1.2" fill="#808386"/>
<path d="M598.5 59.55h3l-1.5 1.9z" fill="#111214"/>
<path d="M606.4 54.4v2.4" stroke="#5b9bd5" stroke-width="0.6"/>
<rect x="609.4" y="54.9" width="6.4" height="1.2" fill="#808386"/>
<path d="M607.6 58.6v2.4" stroke="#5b9bd5" stroke-width="0.6"/>
<rect x="610.4" y="59.2" width="5.4" height="1.2" fill="#808386"/>
<rect x="611.8" y="63.3" width="3" height="1.2" fill="#808386"/>
<path d="M620.5 59.55h3l-1.5 1.9z" fill="#111214"/>
<rect x="625.85" y="54" width="0.7" height="12" fill="#d7d9db"/>
<rect x="631.2" y="54.5" width="11.6" height="1.1" fill="#9a9da0"/><rect x="631.2" y="64.6" width="11.6" height="1.1" fill="#9a9da0"/><rect x="636.8000000000001" y="57" width="6" height="1" fill="#6a6d70"/><rect x="636.8000000000001" y="59.6" width="6" height="1" fill="#6a6d70"/><rect x="636.8000000000001" y="62.2" width="6" height="1" fill="#6a6d70"/><path d="M631.2 60.1h4.4M634.0 58.4l1.8 1.7-1.8 1.7" fill="none" stroke="#86b0d6" stroke-width="0.8"/>
<rect x="648.4" y="54.5" width="11.6" height="1.1" fill="#9a9da0"/><rect x="648.4" y="64.6" width="11.6" height="1.1" fill="#9a9da0"/><rect x="654.0" y="57" width="6" height="1" fill="#6a6d70"/><rect x="654.0" y="59.6" width="6" height="1" fill="#6a6d70"/><rect x="654.0" y="62.2" width="6" height="1" fill="#6a6d70"/><path d="M648.8 60.1h4.4M650.6 58.4l-1.8 1.7 1.8 1.7" fill="none" stroke="#86b0d6" stroke-width="0.8"/>
<rect x="663.85" y="54" width="0.7" height="12" fill="#d7d9db"/>
<path d="M671.4 55v10.4M669.4 57l2-2 2 2M669.4 63.4l2 2 2-2" fill="none" stroke="#88b6dc" stroke-width="0.8"/>
<rect x="675" y="56.4" width="5.6" height="1.1" fill="#6a6d70"/>
<rect x="675" y="59.6" width="5.6" height="1.1" fill="#6a6d70"/>
<rect x="675" y="62.8" width="5.6" height="1.1" fill="#6a6d70"/>
<path d="M684.5 59.55h3l-1.5 1.9z" fill="#111214"/>
<rect x="691.2" y="56.4" width="6" height="1.1" fill="#6a6d70"/>
<rect x="691.2" y="59.6" width="6" height="1.1" fill="#6a6d70"/>
<rect x="691.2" y="62.8" width="6" height="1.1" fill="#6a6d70"/>
<path d="M700.4 55v10.4M698.4 57l2-2 2 2M698.4 63.4l2 2 2-2" fill="none" stroke="#88b6dc" stroke-width="0.8"/>
<rect x="709.4" y="56.6" width="4.6" height="0.8" fill="#d6d8da"/>
<rect x="709.4" y="58.2" width="4.6" height="0.8" fill="#d6d8da"/>
<rect x="709.4" y="61" width="4.6" height="0.8" fill="#d6d8da"/>
<rect x="709.4" y="62.6" width="4.6" height="0.8" fill="#d6d8da"/>
<path d="M717.600 54.600v9.800" stroke="#dde3e9" stroke-width="0.700"/>
<path d="M716.300 56.800l1.300 1.300 1.300-1.300M716.300 62.800l1.300-1.300 1.300 1.300" fill="none" stroke="#c3c9cf" stroke-width="0.800"/>
<rect x="0" y="415.2" width="800" height="0.7" fill="#cdd0d2"/>
<rect x="4.500" y="418" width="6" height="6.200" fill="#f6f6f6" stroke="#a4a7aa" stroke-width="0.700"/>
<rect x="6.600" y="418.300" width="2.600" height="1.800" fill="#c9cbcd"/>
<path d="M568.600 418.400h2.500M569.850 418.400v6M568.600 424.400h2.500" fill="none" stroke="#3a3d40" stroke-width="0.900"/><path d="M572 424.300h6" stroke="#808386" stroke-width="0.800"/>
<path d="M681 418h3.6l1.6 1.6v5h-5.2z" fill="#3daee9"/>
<path d="M689.4 418.6h3l1.6 1.6v4.2h-4.6zM694.8 418.6h3l1.6 1.6v4.2h-4.6z" fill="#fbfbfb" stroke="#44474a" stroke-width="0.7"/>
<path d="M703.4 424.4v-4.2l1.6-1.6h3.4v5.8zM708.4 418.6h3.4l1.6 1.6v4.2h-5z" fill="#fbfbfb" stroke="#44474a" stroke-width="0.7"/>
<rect x="720" y="421.4" width="2.6" height="0.7" fill="#44474a"/>
<rect x="725.4" y="421.45" width="40.8" height="0.7" fill="#7b7e81"/>
<rect x="734.2" y="420.6" width="0.9" height="2.4" fill="#44474a"/>
<circle cx="745.6" cy="421.8" r="1.5" fill="#f4f4f4" stroke="#44474a" stroke-width="0.7"/>
<path d="M769.2 421.8h3M770.7 420.3v3" stroke="#44474a" stroke-width="0.7"/>
<rect x="0" y="427.4" width="26" height="22.6" fill="#23272b"/>
<rect x="80" y="427.4" width="26.4" height="22.6" fill="#464b52"/>
<rect x="107" y="427.4" width="26" height="22.6" fill="#464b52"/>
<rect x="188" y="427.4" width="26.4" height="22.6" fill="#43474d"/>
<rect x="215" y="427.4" width="26.4" height="22.6" fill="#43474d"/>
<rect x="269" y="427.4" width="26.4" height="22.6" fill="#4a4e55"/>
<rect x="242" y="427.4" width="26.4" height="22.6" fill="#3a6687"/>
<rect x="242" y="427.4" width="26.4" height="1.100" fill="#4a9cd0"/>
<rect x="26" y="427.4" width="0.6" height="22.6" fill="#30343a"/>
<rect x="53" y="427.4" width="0.6" height="22.6" fill="#30343a"/>
<rect x="79.6" y="427.4" width="0.6" height="22.6" fill="#30343a"/>
<rect x="106.6" y="427.4" width="0.6" height="22.6" fill="#30343a"/>
<rect x="133" y="427.4" width="0.6" height="22.6" fill="#30343a"/>
<rect x="160" y="427.4" width="0.6" height="22.6" fill="#30343a"/>
<rect x="187.4" y="427.4" width="0.6" height="22.6" fill="#30343a"/>
<rect x="214.6" y="427.4" width="0.6" height="22.6" fill="#30343a"/>
<rect x="241.6" y="427.4" width="0.6" height="22.6" fill="#30343a"/>
<rect x="268.6" y="427.4" width="0.6" height="22.6" fill="#30343a"/>
<rect x="295.6" y="427.4" width="0.6" height="22.6" fill="#30343a"/>
<path d="M15 433.500l3.300 3-3.300 3" fill="none" stroke="#f2f3f4" stroke-width="1.900"/>
<circle cx="10.700" cy="433.400" r="0.850" fill="#f2f3f4"/><circle cx="8.800" cy="438.300" r="1.250" fill="#f2f3f4"/><circle cx="12.200" cy="443.400" r="1.650" fill="#f2f3f4"/>
<rect x="31" y="432.200" width="15.600" height="10.800" rx="0.800" fill="#2fb3a4"/>
<path d="M46.600 433v10h-8.600l3.600-10.800h4.200a0.800 0.800 0 0 1 0.800 0.800z" fill="#c43f7f"/>
<path d="M31 443v-4.600l7.600-0.400 1.600 5z" fill="#41605f"/>
<path d="M31 436.600v-3.600a0.800 0.800 0 0 1 0.800-0.800h7z" fill="#6cc7d6" opacity="0.800"/>
<rect x="35.800" y="435.800" width="2.600" height="3.600" fill="#f0e6ee"/><rect x="39.200" y="435.800" width="2.800" height="3.600" fill="#f6dfe9"/>
<path d="M35.600 445.200h7l-1.200-2.200h-4.600z" fill="#5d6368"/>
<rect x="34.600" y="445" width="9" height="0.900" fill="#e4e6e8"/>
<rect x="58" y="433" width="15.4" height="12.4" rx="0.8" fill="#2f8fcf"/>
<path d="M58 436.4h15.4v8.2a0.8 0.8 0 0 1-0.8 0.8h-13.8a0.8 0.8 0 0 1-0.8-0.8z" fill="#3ea6e6"/>
<rect x="59.4" y="434.2" width="12.6" height="1.5" fill="#d9efff"/>
<defs><linearGradient id="ffg" x1="0.85" y1="0.1" x2="0.2" y2="0.95"><stop offset="0" stop-color="#ffe14a"/><stop offset="0.35" stop-color="#ff9a1f"/><stop offset="0.7" stop-color="#ff4a3a"/><stop offset="1" stop-color="#ee2f5e"/></linearGradient><radialGradient id="kg" cx="0.4" cy="0.35" r="0.7"><stop offset="0" stop-color="#36b3ff"/><stop offset="1" stop-color="#1a73e0"/></radialGradient></defs>
<path d="M85.4 437.2c0.200-1.800 0.800-3.200 1.800-4.400c0.200 0.800 0.600 1.400 1.200 1.800c1.400-1.400 3-1.800 4.400-1.600c0.400-1.400 1.400-2.400 2.600-2.800c0.600 1.400 1.800 2.200 3 3.600c1.800 2 2.600 4.200 2.400 6.600c-0.400 4-3.600 6.800-7.800 6.800c-4.600 0-8.200-3.800-7.600-10z" fill="url(#ffg)"/>
<circle cx="92.800" cy="439.400" r="3" fill="#6f3fd6"/>
<path d="M89.600 437.600c1-1.600 3-2.400 5.200-1.800c-1.600 0.200-2.600 0.800-3.200 2z" fill="#ff8a2a"/>
<circle cx="120" cy="439" r="7.4" fill="url(#kg)"/>
<path d="M115.400 437.600c3-0.600 6.400-2 9.400-4.400M118.600 441.400c2.400-2.200 5-3.600 7.800-4.200M119.600 434.400c0.800 3.600 0.400 7-1.400 10.400M122.200 437.200c0.200 2.400 1 4.400 2.400 6" fill="none" stroke="#e6f0fb" stroke-width="1.2" opacity="0.9"/>
<rect x="140.800" y="434.800" width="12.800" height="10.500" rx="0.800" fill="#2594ea"/>
<path d="M144.800 435v-1.200a2.400 2.400 0 0 1 4.800 0v1.200" fill="none" stroke="#2a7fc0" stroke-width="1.100"/>
<path d="M146.600 438l1.600 2-1.600 2" fill="none" stroke="#8fd0ff" stroke-width="0.9"/>
<rect x="166.8" y="432.2" width="15.2" height="13.6" rx="0.8" fill="#3a3f45"/>
<path d="M167.600 445.200v-6l2.400-3.400 2.600 2.600 2 2.400 2.600-2.800 2.600 2.200 1.400 1.200v3.800z" fill="#63b581"/>
<rect x="194" y="432.2" width="14.800" height="13.600" rx="0.8" fill="#2b2f34"/>
<path d="M196.400 437.200h10M196.400 441.400h10" stroke="#aeb2b6" stroke-width="0.8"/>
<rect x="203" y="436" width="2.400" height="2.400" fill="#e4e6e8"/><rect x="198.400" y="440.200" width="2.400" height="2.400" fill="#e4e6e8"/>
<rect x="221" y="432.200" width="15" height="13.600" rx="0.8" fill="#3a3e44"/>
<path d="M226.600 435.600l3.400 3.400-3.400 3.400" fill="none" stroke="#c4c7ca" stroke-width="1.1"/>
<defs><linearGradient id="wg" x1="0" y1="0" x2="0" y2="1"><stop offset="0" stop-color="#2196ea"/><stop offset="1" stop-color="#1668c4"/></linearGradient><linearGradient id="ig" x1="0" y1="0" x2="0" y2="1"><stop offset="0" stop-color="#f4662c"/><stop offset="1" stop-color="#dc3320"/></linearGradient></defs>
<path d="M249.200 429.800h9l4.200 4.200v12.400h-13.200z" fill="url(#wg)"/>
<path d="M258.200 429.800l4.200 4.200h-4.200z" fill="#8fcdf8"/>
<path d="M258.200 434l4.200 0 0 2.400z" fill="#1259a8" opacity="0.6"/>
<path d="M251.600 437.600h2.600M255.600 437.600h4.400M251.600 439.600h2.600M255.600 439.600h4.400M251.600 442h8.400" stroke="#a8d8fa" stroke-width="1"/>
<circle cx="255.200" cy="446.900" r="1.900" fill="#4fd07a"/>
<path d="M276 429.800h9l4.200 4.200v12.400h-13.200z" fill="url(#ig)"/>
<path d="M285 429.800l4.200 4.200h-4.200z" fill="#f9b594"/>
<path d="M285 434l4.200 0 0 2.400z" fill="#a82a12" opacity="0.6"/>
<path d="M278.600 437.200h8" stroke="#f9b79c" stroke-width="0.9"/>
<path d="M278.600 439.400h2.600M278.600 441.400h2.600M278.600 443.200h2.600" stroke="#fbd0be" stroke-width="0.9"/>
<rect x="282.400" y="439" width="4.600" height="4.400" fill="#fbd9ca"/>
<circle cx="281.900" cy="446.900" r="1.900" fill="#4fd07a"/>
<path d="M642.300 437.800a3.700 3.700 0 0 1 6.600-1.600M649.500 439.800a3.700 3.700 0 0 1-6.600 1.600" fill="none" stroke="#d6d9dc" stroke-width="1.100"/>
<path d="M649.600 434.200v2.600h-2.600M642.200 443.400v-2.600h2.600" fill="none" stroke="#d6d9dc" stroke-width="1"/>
<rect x="657.400" y="435" width="8" height="7.600" rx="0.600" fill="none" stroke="#d6d9dc" stroke-width="1"/>
<rect x="658.400" y="434" width="6" height="2.200" fill="#d6d9dc"/><rect x="658.800" y="438.400" width="4.400" height="2" fill="#d6d9dc"/>
<path d="M672.600 437.200h2l3-2.800v9.200l-3-2.800h-2z" fill="#d6d9dc"/>
<path d="M679.200 435.800a4.600 4.600 0 0 1 0 6.400" fill="none" stroke="#8c9094" stroke-width="0.9"/>
<circle cx="693" cy="439" r="1.900" fill="#d6d9dc"/>
<path d="M693 434v2M693 442v2M688 439h2M696 439h2M689.500 435.500l1.400 1.400M695.100 441.100l1.400 1.400M696.500 435.500l-1.400 1.400M690.900 441.100l-1.400 1.400" stroke="#d6d9dc" stroke-width="0.8"/>
<path d="M703.800 437a7 7 0 0 1 9.800 0M705.400 439a4.800 4.800 0 0 1 6.600 0M707 441a2.600 2.600 0 0 1 3.400 0" fill="none" stroke="#d6d9dc" stroke-width="0.9"/>
<circle cx="708.700" cy="443" r="0.900" fill="#d6d9dc"/>
<rect x="719.400" y="436.200" width="9.600" height="5.800" fill="none" stroke="#d6d9dc" stroke-width="0.900"/>
<rect x="720" y="436.800" width="3.200" height="4.600" fill="#d6d9dc"/><rect x="729.300" y="437.800" width="1" height="2.600" fill="#d6d9dc"/>
<path d="M734.400 441.400l4.400-4.400 4.400 4.400" fill="none" stroke="#d6d9dc" stroke-width="1"/>
<rect x="783.600" y="434.400" width="9" height="7.200" fill="none" stroke="#d6d9dc" stroke-width="0.9"/>
<rect x="783.200" y="442.400" width="9.800" height="0.900" fill="#d6d9dc"/>
</svg>
</div>
</body>
</html>
